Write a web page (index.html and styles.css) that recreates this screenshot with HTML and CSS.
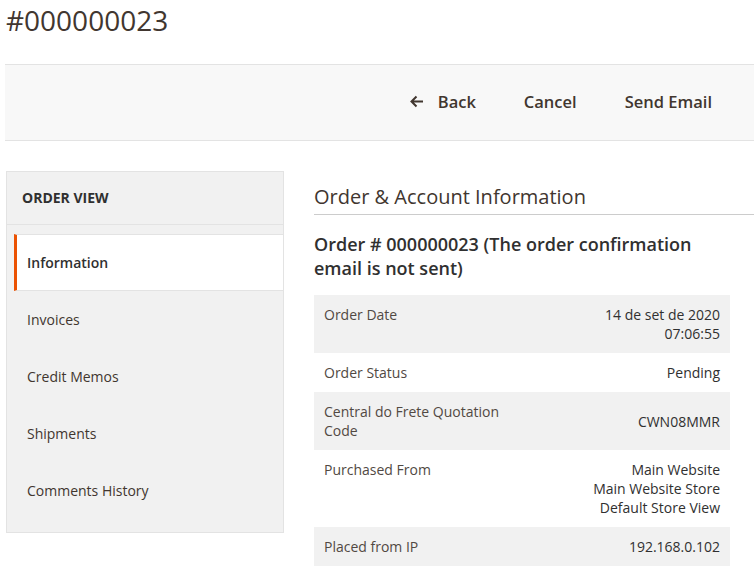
FILE: index.html
```html
<!DOCTYPE html>
<html>
<head>
	<meta charset="UTF-8">
	<title>#000000023 / Orders</title>
	<link rel="stylesheet" href="styles.css">
</head>
<body>
	<header class="page-header">
		<h1 class="page-title">#000000023</h1>
	</header>

	<div class="page-actions">
		<button class="action-btn back">
			<svg class="back-icon" width="15" height="13" viewBox="0 0 15 13">
				<path d="M14 6.5H2.5M7.5 1.5l-5 5 5 5" fill="none" stroke="#41362f" stroke-width="2"/>
			</svg>
			<span>Back</span>
		</button>
		<button class="action-btn">Cancel</button>
		<button class="action-btn">Send Email</button>
	</div>

	<div class="page-columns">
		<aside class="side-nav">
			<div class="side-nav-title">Order View</div>
			<ul class="side-nav-items">
				<li class="side-nav-item active">Information</li>
				<li class="side-nav-item">Invoices</li>
				<li class="side-nav-item">Credit Memos</li>
				<li class="side-nav-item">Shipments</li>
				<li class="side-nav-item">Comments History</li>
			</ul>
		</aside>

		<main class="main-col">
			<h2 class="section-title">Order &amp; Account Information</h2>
			<h3 class="order-title">Order # 000000023 (The order confirmation email is not sent)</h3>
			<table class="info-table">
				<tr>
					<th>Order Date</th>
					<td>14 de set de 2020<br>07:06:55</td>
				</tr>
				<tr>
					<th>Order Status</th>
					<td>Pending</td>
				</tr>
				<tr>
					<th>Central do Frete Quotation Code</th>
					<td>CWN08MMR</td>
				</tr>
				<tr>
					<th>Purchased From</th>
					<td>Main Website<br>Main Website Store<br>Default Store View</td>
				</tr>
				<tr>
					<th>Placed from IP</th>
					<td>192.168.0.102</td>
				</tr>
			</table>
		</main>
	</div>
</body>
</html>
```

FILE: styles.css
```css
body {
	margin: 0;
	font-family: "Open Sans", "DejaVu Sans", sans-serif;
	color: #303030;
	background: #fff;
}
.page-header {
	padding: 2px 6px 0;
}
.page-title {
	margin: 0;
	font-size: 28px;
	line-height: 36px;
	font-weight: 400;
	color: #41362f;
}
.page-actions {
	margin: 26px 0 0 5px;
	height: 73px;
	padding: 0 42px 2px 0;
	background: #f8f8f8;
	border-top: 1px solid #e3e3e3;
	border-bottom: 1px solid #e3e3e3;
	display: flex;
	justify-content: flex-end;
	align-items: center;
	gap: 48px;
}
.action-btn {
	background: none;
	border: none;
	padding: 0;
	font-family: inherit;
	font-size: 16.5px;
	font-weight: 600;
	color: #41362f;
	display: flex;
	align-items: center;
	gap: 14px;
	cursor: pointer;
}
.back-icon {
	display: block;
}
.page-columns {
	display: flex;
	gap: 30px;
	margin-top: 30px;
	padding-left: 6px;
}
.side-nav {
	width: 276px;
	flex: none;
	background: #f1f1f1;
	border: 1px solid #e3e3e3;
	align-self: flex-start;
}
.side-nav-title {
	height: 52px;
	line-height: 52px;
	padding-left: 15px;
	border-bottom: 1px solid #e3e3e3;
	font-size: 14px;
	font-weight: 700;
	text-transform: uppercase;
	color: #303030;
}
.side-nav-items {
	list-style: none;
	margin: 0;
	padding: 9px 0 13px 7px;
}
.side-nav-item {
	height: 55px;
	line-height: 55px;
	padding-left: 10px;
	border-top: 1px solid transparent;
	border-bottom: 1px solid transparent;
	border-left: 3px solid transparent;
	font-size: 14px;
	color: #41362f;
}
.side-nav-item.active {
	background: #fff;
	border-top-color: #e3e3e3;
	border-bottom-color: #e3e3e3;
	border-left-color: #eb5202;
	font-weight: 600;
	color: #303030;
}
.main-col {
	flex: 1;
}
.section-title {
	margin: 0;
	padding: 13px 0 4px;
	font-size: 20px;
	line-height: 26px;
	font-weight: 400;
	color: #41362f;
	border-bottom: 1px solid #cccccc;
}
.order-title {
	margin: 17px 0 0;
	width: 416px;
	font-size: 18px;
	line-height: 24px;
	font-weight: 600;
	color: #303030;
}
.info-table {
	margin-top: 15px;
	width: 416px;
	border-collapse: collapse;
	font-size: 14px;
	line-height: 19px;
}
.info-table tr:nth-child(odd) {
	background: #f1f1f1;
}
.info-table th,
.info-table td {
	padding: 10px;
}
.info-table th {
	width: 50%;
	text-align: left;
	vertical-align: top;
	font-weight: 400;
	color: #514943;
}
.info-table td {
	text-align: right;
	vertical-align: middle;
	color: #303030;
}
```
